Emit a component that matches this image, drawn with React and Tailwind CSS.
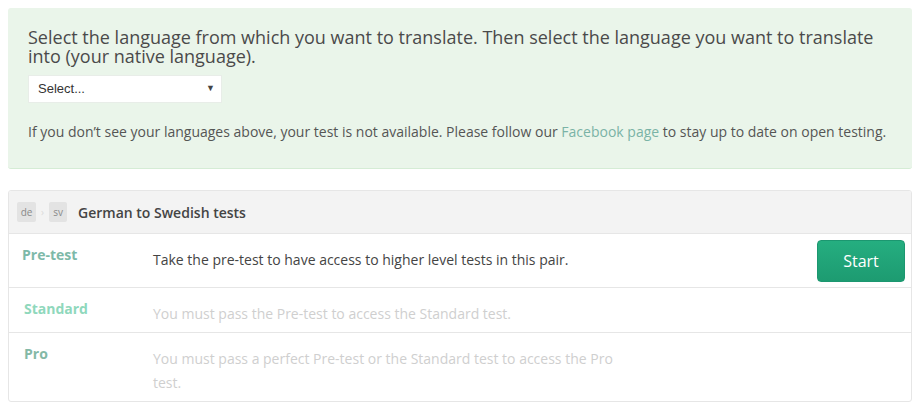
export default function App() {
  const rows = [
    {
      label: 'Pre-test',
      labelColor: 'text-[#7db9a8]',
      text: 'Take the pre-test to have access to higher level tests in this pair.',
      textColor: 'text-[#444]',
      pad: 'pl-[13px]',
      active: true,
      h: 'h-[54px]',
    },
    {
      label: 'Standard',
      labelColor: 'text-[#8fd8bc]',
      text: 'You must pass the Pre-test to access the Standard test.',
      textColor: 'text-[#cfcfcf]',
      pad: 'pl-[15px]',
      h: 'h-[45px]',
    },
    {
      label: 'Pro',
      labelColor: 'text-[#84b9a6]',
      text: 'You must pass a perfect Pre-test or the Standard test to access the Pro test.',
      textColor: 'text-[#cfcfcf]',
      pad: 'pl-[15px]',
      h: 'min-h-[67px]',
    },
  ];

  return (
    <div className="bg-white pl-2 pr-[11px] py-2 font-['Open_Sans',sans-serif] w-[923px]">
      {/* Language picker */}
      <div className="bg-[#eaf5ea] rounded-[3px] border-b border-[#d5ecd5] pl-5 pr-4 pt-[20px] pb-[26px]">
        <h2 className="text-[18px] leading-[19px] text-[#4a4a4a]">
          Select the language from which you want to translate. Then select the language you want to translate into (your native language).
        </h2>
        <div className="mt-[9px] w-[194px] h-[28px] bg-white border border-[#e8ede8] flex items-center justify-between pl-[9px] pr-[6px] font-['Liberation_Sans',sans-serif] text-[13px] text-[#333]">
          <span>Select...</span>
          <span className="text-[9px] text-[#444]">▼</span>
        </div>
        <p className="mt-[19px] text-[14px] leading-5 text-[#555]">
          If you don’t see your languages above, your test is not available. Please follow our{' '}
          <a className="text-[#7ab3a6]">Facebook page</a> to stay up to date on open testing.
        </p>
      </div>

      {/* Tests */}
      <div className="mt-[21px] border border-[#e6e6e6] rounded-[3px] overflow-hidden">
        <div className="bg-[#f3f3f3] h-[43px] border-b border-[#e6e6e6] flex items-center pl-[8px] pr-2">
          <span className="w-[19px] h-[20px] rounded-[2px] bg-[#e3e3e3] text-[10px] text-[#8a8a8a] flex items-center justify-center">de</span>
          <span className="mx-[5px] text-[10px] text-[#dadada]">›</span>
          <span className="w-[18px] h-[20px] rounded-[2px] bg-[#e3e3e3] text-[10px] text-[#8a8a8a] flex items-center justify-center">sv</span>
          <span className="ml-[11px] text-[14px] font-semibold text-[#444]">German to Swedish tests</span>
        </div>
        {rows.map((r, i) => (
          <div key={r.label} className={`flex ${r.h} ${i < rows.length - 1 ? 'border-b border-[#e6e6e6]' : ''}`}>
            <div className={`w-[144px] shrink-0 ${r.pad} pt-[11px] text-[14px] leading-5 font-bold ${r.labelColor}`}>{r.label}</div>
            <div className={`w-[470px] pt-[14px] pb-[6px] text-[14px] leading-6 ${r.textColor}`}>{r.text}</div>
            <div className="flex-1 flex justify-end items-start pt-[6px] pr-[6px]">
              {r.active && (
                <button className="w-[88px] h-[42px] rounded-[4px] bg-gradient-to-b from-[#25ae80] to-[#1d9b71] border border-[#1c9770] text-white text-[16px]">
                  Start
                </button>
              )}
            </div>
          </div>
        ))}
      </div>
    </div>
  );
}
